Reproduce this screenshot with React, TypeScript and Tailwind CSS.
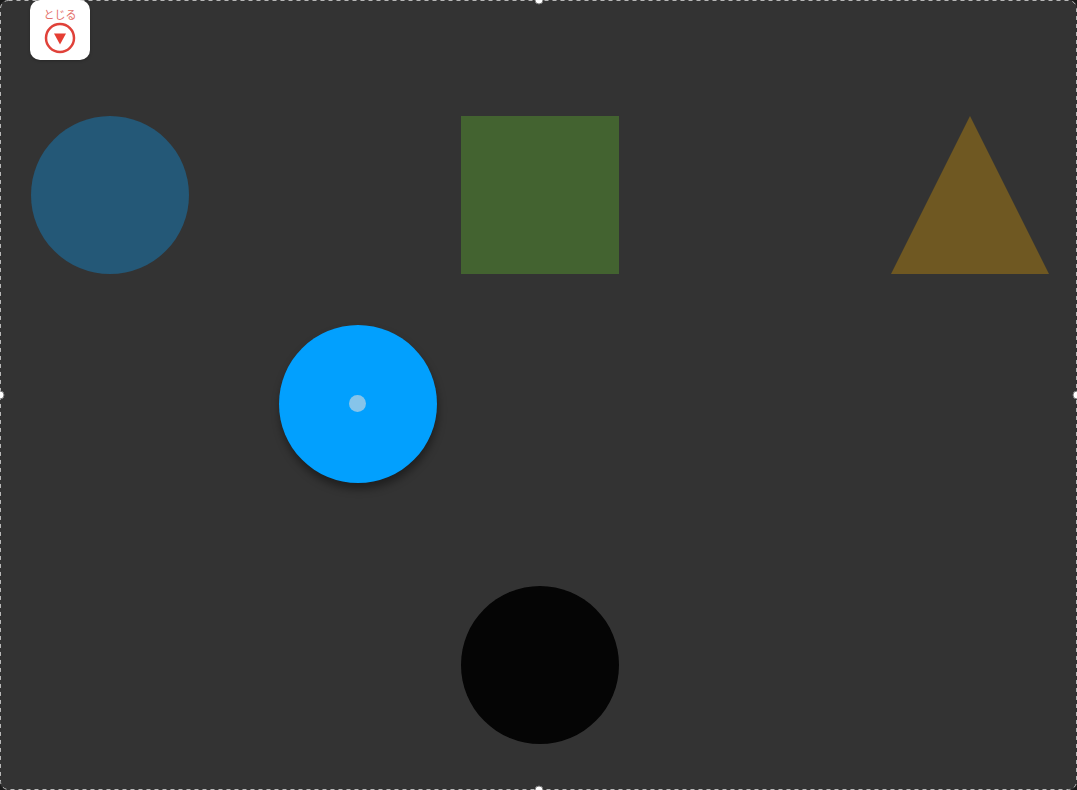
const HANDLES = [
  "left-1/2 top-0 -translate-x-1/2 -translate-y-1/2",
  "left-1/2 bottom-0 -translate-x-1/2 translate-y-1/2",
  "left-0 top-1/2 -translate-x-1/2 -translate-y-1/2",
  "right-0 top-1/2 translate-x-1/2 -translate-y-1/2",
];

/** Close button pinned to the top of the canvas. */
function CloseButton() {
  return (
    <button
      type="button"
      className="absolute left-[30px] top-0 flex h-[60px] w-[60px] flex-col items-center rounded-[10px] bg-white pt-[8px] shadow-[0_1px_3px_rgba(0,0,0,0.25)]"
    >
      <span className="text-[11px] leading-[13px] text-[#e4706a] [font-family:'Noto_Sans_CJK_JP',sans-serif]">
        とじる
      </span>
      <svg viewBox="0 0 32 32" className="mt-[1px] h-[32px] w-[32px]">
        <circle cx="16" cy="16" r="14" fill="none" stroke="#e0423a" strokeWidth="2.5" />
        <path d="M10 11.5h12L16 22.5z" fill="#e53e33" />
      </svg>
    </button>
  );
}

export default function App() {
  return (
    <div className="relative h-[790px] w-[1077px] overflow-hidden bg-[#1a1a1a]">
      <div className="absolute inset-0 rounded-[8px] bg-[#333333]" />

      {/* selection outline */}
      <svg viewBox="0 0 1077 790" className="absolute inset-0 h-[790px] w-[1077px]">
        <rect
          x="0.5"
          y="0.5"
          width="1076"
          height="789"
          rx="8"
          fill="none"
          stroke="#b8b8b8"
          strokeDasharray="4 4"
        />
      </svg>

      {HANDLES.map((pos) => (
        <span
          key={pos}
          className={`absolute h-[9px] w-[9px] rounded-full border border-[#777777] bg-white ${pos}`}
        />
      ))}

      <CloseButton />

      {/* shapes on the free canvas */}
      <div className="absolute left-[31px] top-[116px] h-[158px] w-[158px] rounded-full bg-[#245877]" />
      <div className="absolute left-[461px] top-[116px] h-[158px] w-[158px] bg-[#436330]" />
      <svg viewBox="0 0 158 158" className="absolute left-[891px] top-[116px] h-[158px] w-[158px]">
        <polygon points="79,0 158,158 0,158" fill="#6f5822" />
      </svg>

      <div className="absolute left-[279px] top-[325px] flex h-[158px] w-[158px] items-center justify-center rounded-full bg-[#02a0fe] shadow-[1px_6px_8px_rgba(0,0,0,0.4)]">
        <span className="mb-[1px] mr-[1px] h-[17px] w-[17px] rounded-full bg-[#86c4ea]" />
      </div>

      <div className="absolute left-[461px] top-[586px] h-[158px] w-[158px] rounded-full bg-[#050505]" />
    </div>
  );
}
